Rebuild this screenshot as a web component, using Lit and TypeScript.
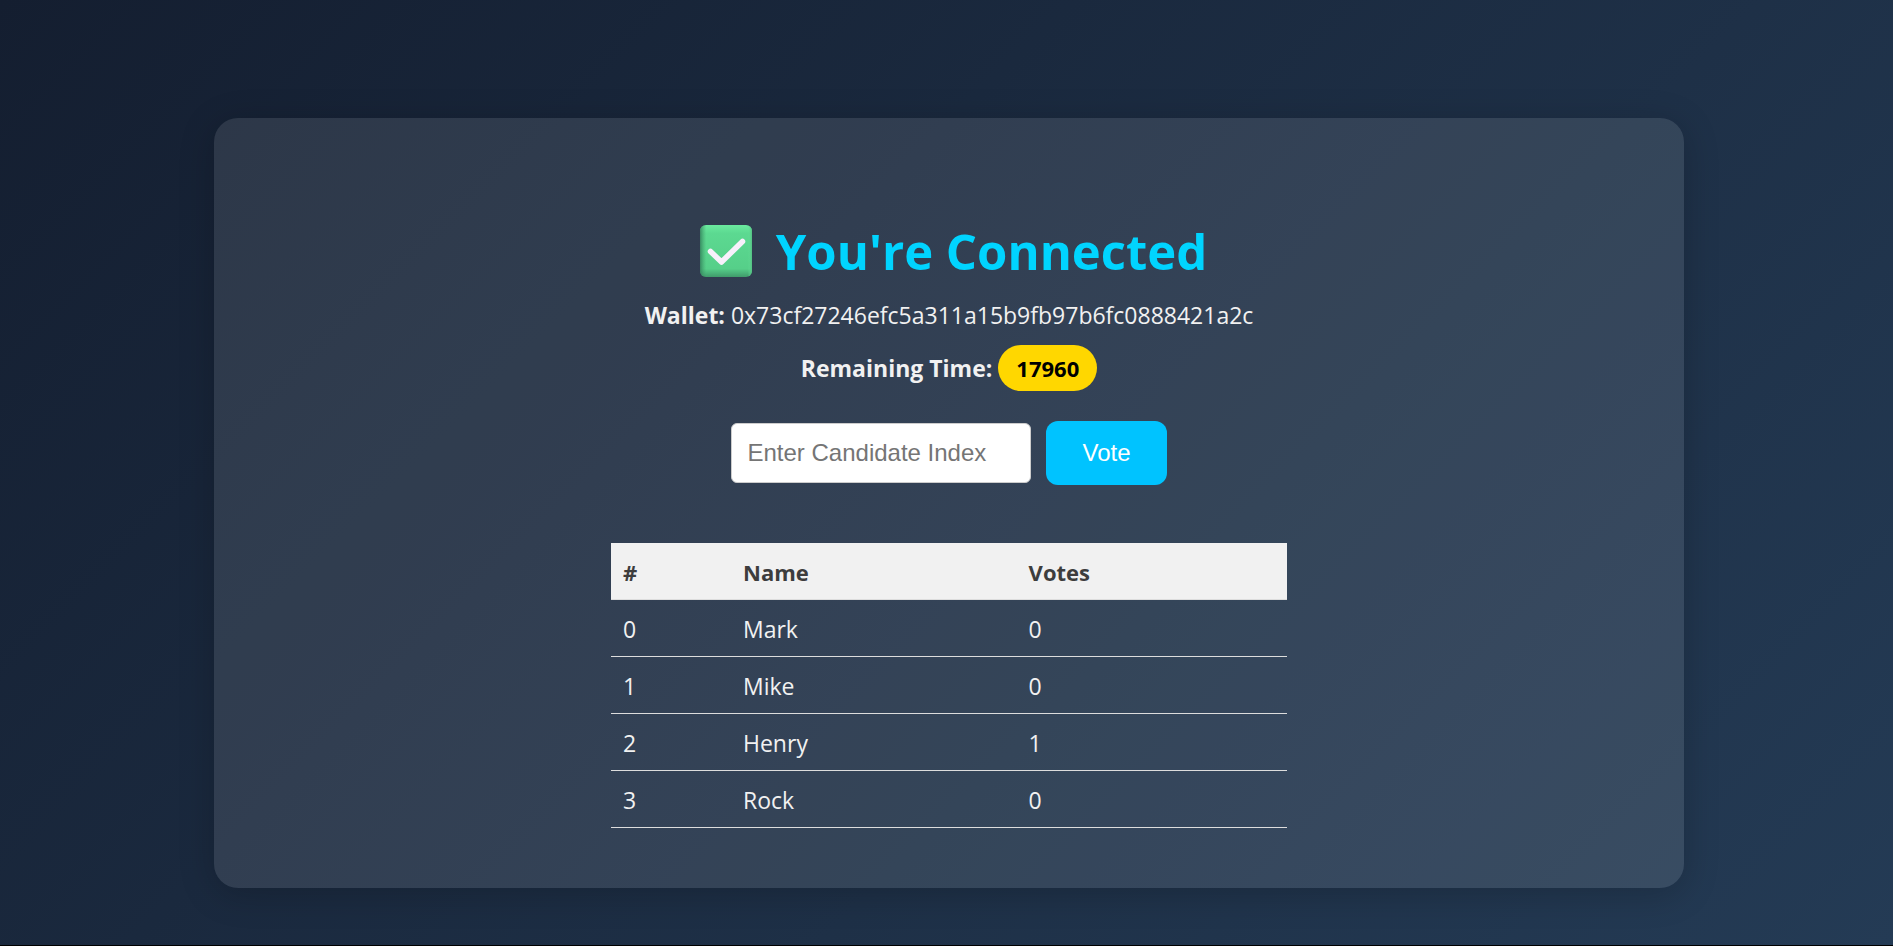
import { LitElement, html, css } from "lit";
import { customElement, state } from "lit/decorators.js";

interface Candidate {
  index: number;
  name: string;
  votes: number;
}

@customElement("app-root")
export class AppRoot extends LitElement {
  static styles = css`
    :host {
      display: block;
      color: #f1f1f1;
      font-family: "Segoe UI", "Open Sans", "Noto Sans", sans-serif;
      font-size: 23px;
      line-height: 32px;
    }
    *,
    *::before,
    *::after {
      box-sizing: border-box;
    }
    .page {
      min-height: 100vh;
      padding: 118px 24px 57px 29px;
      background: linear-gradient(135deg, #141e30, #243b55);
      border-bottom: 1px solid #000;
    }
    .card {
      display: flex;
      flex-direction: column;
      align-items: center;
      max-width: 1470px;
      margin: 0 auto;
      padding: 96px 60px 60px;
      border-radius: 24px;
      background: rgba(255, 255, 255, 0.1);
      box-shadow: 0 6px 36px rgba(0, 0, 0, 0.2);
    }
    .title {
      display: flex;
      align-items: center;
      gap: 24px;
      margin: 0;
      padding-left: 9px;
      color: #00d4ff;
      font-size: 49px;
      font-weight: 700;
      line-height: 74px;
    }
    .check {
      display: block;
      width: 52px;
      height: 52px;
    }
    .line {
      margin: 0;
    }
    .wallet {
      margin-top: 11px;
    }
    .time {
      display: flex;
      align-items: center;
      gap: 6px;
      margin-top: 14px;
      font-weight: 700;
    }
    .pill {
      padding: 7px 18px;
      border-radius: 23px;
      background: #ffd700;
      color: #000;
      font-size: 22px;
      font-weight: 700;
    }
    .form {
      display: flex;
      align-items: center;
      gap: 15px;
      margin-top: 30px;
    }
    .field {
      width: 300px;
      height: 60px;
      padding: 0 15px;
      border: 1px solid #ccc;
      border-radius: 6px;
      background: #fff;
      color: #333;
      font: 24px "Liberation Sans", Arial, sans-serif;
    }
    .field::placeholder {
      color: #757575;
    }
    .vote {
      height: 64px;
      padding: 0 36px;
      border: 0;
      border-radius: 12px;
      background: #00c3ff;
      color: #fff;
      font: 24px "Liberation Sans", Arial, sans-serif;
      cursor: pointer;
    }
    .results {
      width: 100%;
      max-width: 676px;
      margin-top: 58px;
      border-collapse: separate;
      border-spacing: 0;
      table-layout: fixed;
    }
    .cell {
      padding: 13px 12px 11px;
      border-bottom: 1px solid #ddd;
      text-align: left;
      font-weight: 400;
    }
    .head {
      background: #f1f1f1;
      color: #3d3d3d;
      font-size: 22px;
      font-weight: 700;
    }
    .col-index {
      width: 120px;
    }
    .col-votes {
      width: 40%;
    }
  `;

  @state() private candidates: Candidate[] = [
    { index: 0, name: "Mark", votes: 0 },
    { index: 1, name: "Mike", votes: 0 },
    { index: 2, name: "Henry", votes: 1 },
    { index: 3, name: "Rock", votes: 0 },
  ];

  @state() private choice = "";

  private onInput(e: Event) {
    this.choice = (e.target as HTMLInputElement).value;
  }

  private vote(e: Event) {
    e.preventDefault();
    if (this.choice.trim() === "") return;
    const index = Number(this.choice);
    this.candidates = this.candidates.map((c) =>
      c.index === index ? { ...c, votes: c.votes + 1 } : c
    );
  }

  render() {
    return html`
      <main class="page">
        <section class="card">
          <h1 class="title">
            <svg class="check" viewBox="0 0 52 52" aria-hidden="true">
              <defs>
                <linearGradient id="face" x1="0" y1="0" x2="0" y2="1">
                  <stop offset="0" stop-color="#6bea9f" />
                  <stop offset="0.16" stop-color="#5cd991" />
                  <stop offset="0.84" stop-color="#56cf89" />
                  <stop offset="1" stop-color="#409b6b" />
                </linearGradient>
                <linearGradient id="side" x1="0" y1="0" x2="1" y2="0">
                  <stop offset="0" stop-color="#2f7957" stop-opacity="0.8" />
                  <stop offset="0.12" stop-color="#3f9a68" stop-opacity="0" />
                  <stop offset="0.92" stop-color="#66e59a" stop-opacity="0" />
                  <stop offset="1" stop-color="#54bd82" />
                </linearGradient>
              </defs>
              <rect width="52" height="52" rx="6" fill="url(#face)" />
              <rect width="52" height="52" rx="6" fill="url(#side)" />
              <path
                d="M10.5 26.5 L21.5 37 L42.5 16.5"
                fill="none"
                stroke="#f8f0fb"
                stroke-width="5.5"
                stroke-linecap="round"
                stroke-linejoin="round"
              />
            </svg>
            <span>You're Connected</span>
          </h1>
          <p class="line wallet">
            <strong>Wallet:</strong> 0x73cf27246efc5a311a15b9fb97b6fc0888421a2c
          </p>
          <p class="line time">
            <span>Remaining Time:</span><span class="pill">17960</span>
          </p>
          <form class="form" @submit=${this.vote}>
            <input
              class="field"
              type="text"
              inputmode="numeric"
              aria-label="Candidate index"
              placeholder="Enter Candidate Index"
              .value=${this.choice}
              @input=${this.onInput}
            />
            <button class="vote" type="submit">Vote</button>
          </form>
          <table class="results">
            <thead>
              <tr>
                <th class="cell head col-index" scope="col">#</th>
                <th class="cell head" scope="col">Name</th>
                <th class="cell head col-votes" scope="col">Votes</th>
              </tr>
            </thead>
            <tbody>
              ${this.candidates.map(
                (c) => html`<tr>
                  <td class="cell">${c.index}</td>
                  <td class="cell">${c.name}</td>
                  <td class="cell">${c.votes}</td>
                </tr>`
              )}
            </tbody>
          </table>
        </section>
      </main>
    `;
  }
}
